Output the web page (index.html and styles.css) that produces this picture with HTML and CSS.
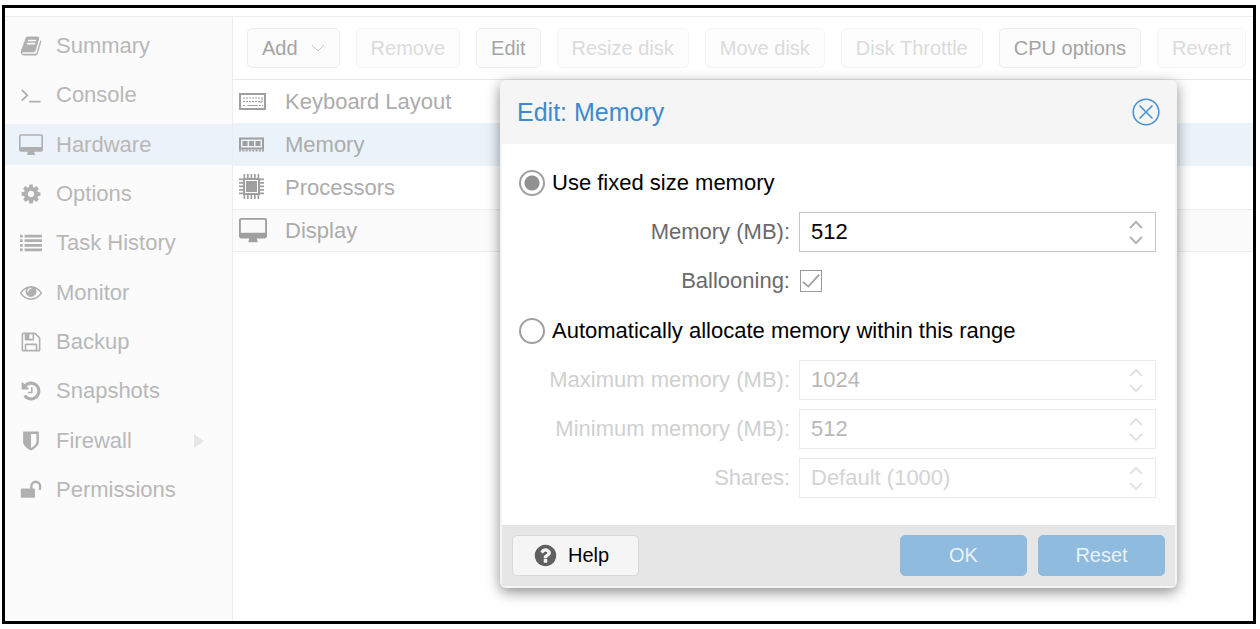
FILE: index.html
```html
<!DOCTYPE html>
<html lang="en">
<head>
<meta charset="utf-8">
<title>Edit: Memory</title>
<link rel="stylesheet" href="styles.css">
</head>
<body>
<div class="frame">
  <nav class="sidebar" aria-label="Virtual machine">
    <a class="nav-item" href="#summary"><svg class="nav-icon" viewBox="0 0 1792 1792"><path d="M1703 478q40 57 18 129l-275 906q-19 64-76.500 107.500t-122.500 43.500h-923q-77 0-148.500-53.500t-99.500-131.500q-24-67-2-127 0-4 3-27t4-37q1-8-3-21.500t-3-19.500q2-11 8-21t16.500-23.500 16.500-23.500q23-38 45-91.500t30-91.500q3-10 .5-30t-.5-28q3-11 17-28t17-23q21-36 42-92t25-90q1-9-2.500-32t.5-28q4-13 22-30.500t22-22.500q19-26 42.500-84.500t27.500-96.500q1-8-3-25.500t-2-26.500q2-8 9-18t18-23 17-21q8-12 16.500-30.500t15-35 16-36 19.500-32 26.500-23.500 36-11.500 47.500 5.500l-1 3q38-9 51-9h761q74 0 114 56t18 130l-274 906q-36 119-71.500 153.500t-128.500 34.500h-869q-27 0-38 15-11 16-1 43 24 70 144 70h923q29 0 56-15.500t35-41.500l300-987q7-22 5-57 38 15 59 43zm-1064 2q-4 13 2 22.500t20 9.500h608q13 0 25.500-9.500t16.500-22.500l21-64q4-13-2-22.500t-20-9.500h-608q-13 0-25.500 9.500t-16.500 22.500zm-83 256q-4 13 2 22.500t20 9.500h608q13 0 25.500-9.500t16.500-22.500l21-64q4-13-2-22.500t-20-9.500h-608q-13 0-25.500 9.500t-16.500 22.500z"/></svg>Summary</a>
    <a class="nav-item" href="#console"><svg class="nav-icon" viewBox="0 0 24 24"><path class="line" d="M2 6.500l6 5.800-6 5.800M10 19.200h12.500"/></svg>Console</a>
    <a class="nav-item nav-item-active" href="#hardware" aria-current="page"><svg class="nav-icon nav-icon-wide" viewBox="-64 -100 1920 1920"><path d="M1728 992v-832q0-13-9.500-22.500t-22.500-9.500h-1600q-13 0-22.500 9.500t-9.500 22.500v832q0 13 9.500 22.500t22.500 9.500h1600q13 0 22.500-9.500t9.500-22.500zm128-832v1088q0 66-47 113t-113 47h-544q0 37 16 77.500t32 71 16 43.500q0 26-19 45t-45 19h-512q-26 0-45-19t-19-45q0-14 16-44t32-70 16-78h-544q-66 0-113-47t-47-113v-1088q0-66 47-113t113-47h1600q66 0 113 47t47 113z"/></svg>Hardware</a>
    <a class="nav-item" href="#options"><svg class="nav-icon" viewBox="0 0 1792 1792"><path d="M1152 896q0-106-75-181t-181-75-181 75-75 181 75 181 181 75 181-75 75-181zm512-109v222q0 12-8 23t-20 13l-185 28q-19 54-39 91 35 50 107 138 10 12 10 25t-9 23q-27 37-99 108t-94 71q-12 0-26-9l-138-108q-44 23-91 38-16 136-29 186-7 28-36 28h-222q-14 0-24.500-8.500t-11.500-21.500l-28-184q-49-16-90-37l-141 107q-10 9-25 9-14 0-25-11-126-114-165-168-7-10-7-23 0-12 8-23 15-21 51-66.500t54-70.500q-27-50-41-99l-183-27q-13-2-21-12.500t-8-23.500v-222q0-12 8-23t19-13l186-28q14-46 39-92-40-57-107-138-10-12-10-24 0-10 9-23 26-36 98.500-107.500t94.500-71.500q13 0 26 10l138 107q44-23 91-38 16-136 29-186 7-28 36-28h222q14 0 24.500 8.500t11.500 21.500l28 184q49 16 90 37l142-107q9-9 24-9 13 0 25 10 129 119 165 170 7 8 7 22 0 12-8 23-15 21-51 66.500t-54 70.500q26 50 41 98l183 28q13 2 21 12.500t8 23.500z"/></svg>Options</a>
    <a class="nav-item" href="#history"><svg class="nav-icon" viewBox="0 0 24 24"><path d="M0 3h3v3H0zM0 8h3v3H0zM0 13h3v3H0zM0 18h3v3H0zM5 3h19v3H5zM5 8h19v3H5zM5 13h19v3H5zM5 18h19v3H5z"/></svg>Task History</a>
    <a class="nav-item" href="#monitor"><svg class="nav-icon" viewBox="0 64 1792 1792"><path d="M1664 960q-152-236-381-353 61 104 61 225 0 185-131.500 316.500t-316.500 131.500-316.500-131.500-131.500-316.500q0-121 61-225-229 117-381 353 133 205 333.500 326.500t434.500 121.500 434.500-121.500 333.500-326.500zm-720-384q0-20-14-34t-34-14q-125 0-214.500 89.500t-89.500 214.500q0 20 14 34t34 14 34-14 14-34q0-86 61-147t147-61q20 0 34-14t14-34zm848 384q0 34-20 69-140 230-376.500 368.500t-499.500 138.500-499.500-139-376.500-368q-20-35-20-69t20-69q140-229 376.500-368t499.500-139 499.500 139 376.500 368q20 35 20 69z"/></svg>Monitor</a>
    <a class="nav-item" href="#backup"><svg class="nav-icon" viewBox="0 0 1792 1792"><path d="M512 1536h768v-384h-768v384zm896 0h128v-896q0-14-10-38.500t-20-34.500l-281-281q-10-10-34-20t-39-10v416q0 40-28 68t-68 28h-576q-40 0-68-28t-28-68v-416h-128v1280h128v-416q0-40 28-68t68-28h832q40 0 68 28t28 68v416zm-384-928v-320q0-13-9.500-22.500t-22.500-9.500h-192q-13 0-22.500 9.500t-9.500 22.500v320q0 13 9.500 22.500t22.500 9.500h192q13 0 22.500-9.500t9.500-22.500zm640 32v928q0 40-28 68t-68 28h-1344q-40 0-68-28t-28-68v-1344q0-40 28-68t68-28h928q40 0 88 20t76 48l280 280q28 28 48 76t20 88z"/></svg>Backup</a>
    <a class="nav-item" href="#snapshots"><svg class="nav-icon" viewBox="0 0 1792 1792"><path d="M1664 896q0 156-61 298t-164 245-245 164-298 61q-172 0-327-72.500t-264-204.500q-7-10-6.500-22.500t8.500-20.500l137-138q10-9 25-9 16 2 23 12 73 95 179 147t225 52q104 0 198.500-40.500t163.500-109.500 109.500-163.500 40.500-198.500-40.500-198.500-109.500-163.500-163.500-109.500-198.500-40.500q-98 0-188 35.500t-160 101.500l137 138q31 30 14 69-17 40-59 40h-448q-26 0-45-19t-19-45v-448q0-42 40-59 39-17 69 14l130 129q107-101 244.500-156.500t284.500-55.500q156 0 298 61t245 164 164 245 61 298zm-640-288v448q0 14-9 23t-23 9h-320q-14 0-23-9t-9-23v-64q0-14 9-23t23-9h224v-352q0-14 9-23t23-9h64q14 0 23 9t9 23z"/></svg>Snapshots</a>
    <a class="nav-item" href="#firewall"><svg class="nav-icon" viewBox="0 0 1792 1792"><path d="M1344 960v-640h-448v1137q119-63 213-137 235-184 235-360zm192-768v768q0 86-33.500 170.500t-83 150-118 127.500-126.500 103-121 77.500-89.500 49.500-42.500 20q-12 6-26 6t-26-6q-16-7-42.500-20t-89.500-49.500-121-77.500-126.500-103-118-127.500-83-150-33.500-170.500v-768q0-26 19-45t45-19h1152q26 0 45 19t19 45z"/></svg>Firewall<svg class="nav-more" viewBox="0 0 10 14"><path d="M0 0l10 7-10 7z"/></svg></a>
    <a class="nav-item" href="#permissions"><svg class="nav-icon" viewBox="0 0 1792 1792"><path d="M1728 576v256q0 26-19 45t-45 19h-64q-26 0-45-19t-19-45v-256q0-106-75-181t-181-75-181 75-75 181v192h96q40 0 68 28t28 68v576q0 40-28 68t-68 28h-960q-40 0-68-28t-28-68v-576q0-40 28-68t68-28h672v-192q0-185 131.500-316.500t316.500-131.500 316.500 131.500 131.500 316.500z"/></svg>Permissions</a>
  </nav>

  <main class="content">
    <div class="toolbar">
      <button class="tool" type="button">Add<svg class="tool-caret" viewBox="0 0 14 8"><path d="M1 1l6 6 6-6"/></svg></button>
      <button class="tool" type="button" disabled>Remove</button>
      <button class="tool" type="button">Edit</button>
      <button class="tool" type="button" disabled>Resize disk</button>
      <button class="tool" type="button" disabled>Move disk</button>
      <button class="tool" type="button" disabled>Disk Throttle</button>
      <button class="tool" type="button">CPU options</button>
      <button class="tool" type="button" disabled>Revert</button>
    </div>
    <table class="hardware">
      <tr>
        <td class="hw-icon"><svg viewBox="0 0 28 28"><path class="stroke" d="M1 6h25v15H1z"/><path class="stroke thin" d="M4 10h17M4 13.500h17M4 17.500h3M20 17.500h4" stroke-dasharray="2 1"/><path class="stroke thin" d="M8.500 17.500h10M23 9v5h-3"/></svg></td>
        <td>Keyboard Layout</td>
      </tr>
      <tr class="selected">
        <td class="hw-icon"><svg viewBox="0 0 28 28"><path class="stroke" d="M1 7.500h23v10H1z"/><path d="M3.500 10h5v5h-5zM10 10h5v5h-5zM16.500 10h5v5h-5z"/><path class="stroke" d="M0 19.500h25" stroke-dasharray="2 1.300"/></svg></td>
        <td>Memory</td>
      </tr>
      <tr>
        <td class="hw-icon"><svg viewBox="0 0 28 28"><path class="stroke" d="M5 5h15v15H5z"/><path d="M7 7h11v11H7z"/><path class="stroke pins" d="M4.500 2h16.500M4.500 23h16.500M2 4.500v16.500M23 4.500v16.500" stroke-dasharray="1.700 1.800"/></svg></td>
        <td>Processors</td>
      </tr>
      <tr class="shaded">
        <td class="hw-icon"><svg viewBox="-64 -64 1920 1920"><path d="M1728 992v-832q0-13-9.500-22.500t-22.500-9.500h-1600q-13 0-22.500 9.500t-9.500 22.500v832q0 13 9.500 22.500t22.500 9.500h1600q13 0 22.500-9.500t9.500-22.500zm128-832v1088q0 66-47 113t-113 47h-544q0 37 16 77.500t32 71 16 43.500q0 26-19 45t-45 19h-512q-26 0-45-19t-19-45q0-14 16-44t32-70 16-78h-544q-66 0-113-47t-47-113v-1088q0-66 47-113t113-47h1600q66 0 113 47t47 113z"/></svg></td>
        <td>Display</td>
      </tr>
    </table>
  </main>

  <form class="dialog" role="dialog" aria-labelledby="dialog-title">
    <header class="dialog-head">
      <h1 class="dialog-title" id="dialog-title">Edit: Memory</h1>
      <button class="close" type="button" aria-label="Close"><svg viewBox="0 0 28 28"><circle cx="14" cy="14" r="12.800"/><path d="M7.500 7.500l13 13M20.500 7.500l-13 13"/></svg></button>
    </header>
    <div class="dialog-body">
      <div class="group">
        <div class="choice">
          <input class="radio" type="radio" name="mode" id="fixed" checked>
          <label for="fixed">Use fixed size memory</label>
        </div>
        <div class="row">
          <label for="memory">Memory (MB):</label>
          <div class="field">
            <input type="text" id="memory" value="512">
            <div class="spin">
              <button type="button" aria-label="Increase memory"><svg viewBox="0 0 16 10"><path d="M2 8l6-6 6 6"/></svg></button>
              <button type="button" aria-label="Decrease memory"><svg viewBox="0 0 16 10"><path d="M2 2l6 6 6-6"/></svg></button>
            </div>
          </div>
        </div>
        <div class="row">
          <label for="ballooning">Ballooning:</label>
          <span class="check">
            <input type="checkbox" id="ballooning" checked>
            <svg viewBox="0 0 24 24"><path d="M3 13l6 5L21 5"/></svg>
          </span>
        </div>
      </div>
      <div class="group">
        <div class="choice">
          <input class="radio" type="radio" name="mode" id="auto">
          <label for="auto">Automatically allocate memory within this range</label>
        </div>
        <div class="row row-off">
          <label for="maximum">Maximum memory (MB):</label>
          <div class="field">
            <input type="text" id="maximum" value="1024" disabled>
            <div class="spin">
              <button type="button" aria-label="Increase maximum" disabled><svg viewBox="0 0 16 10"><path d="M2 8l6-6 6 6"/></svg></button>
              <button type="button" aria-label="Decrease maximum" disabled><svg viewBox="0 0 16 10"><path d="M2 2l6 6 6-6"/></svg></button>
            </div>
          </div>
        </div>
        <div class="row row-off">
          <label for="minimum">Minimum memory (MB):</label>
          <div class="field">
            <input type="text" id="minimum" value="512" disabled>
            <div class="spin">
              <button type="button" aria-label="Increase minimum" disabled><svg viewBox="0 0 16 10"><path d="M2 8l6-6 6 6"/></svg></button>
              <button type="button" aria-label="Decrease minimum" disabled><svg viewBox="0 0 16 10"><path d="M2 2l6 6 6-6"/></svg></button>
            </div>
          </div>
        </div>
        <div class="row row-off">
          <label for="shares">Shares:</label>
          <div class="field">
            <input type="text" id="shares" placeholder="Default (1000)" disabled>
            <div class="spin">
              <button type="button" aria-label="Increase shares" disabled><svg viewBox="0 0 16 10"><path d="M2 8l6-6 6 6"/></svg></button>
              <button type="button" aria-label="Decrease shares" disabled><svg viewBox="0 0 16 10"><path d="M2 2l6 6 6-6"/></svg></button>
            </div>
          </div>
        </div>
      </div>
    </div>
    <footer class="dialog-foot">
      <button class="action help" type="button"><svg class="help-icon" viewBox="0 0 1792 1792"><path d="M1024 1376v-192q0-14-9-23t-23-9h-192q-14 0-23 9t-9 23v192q0 14 9 23t23 9h192q14 0 23-9t9-23zm256-672q0-88-55.500-163t-138.500-116-170-41q-243 0-371 213-15 24 8 42l132 100q7 6 19 6 16 0 25-12 53-68 86-92 34-24 86-24 48 0 85.500 26t37.500 59q0 38-20 61t-68 45q-63 28-115.500 86.500t-52.500 125.500v36q0 14 9 23t23 9h192q14 0 23-9t9-23q0-19 21.500-49.500t54.500-49.500q32-18 49-28.500t46-35 44.500-48 28-60.500 12.500-81zm384 192q0 209-103 385.500t-279.500 279.500-385.500 103-385.500-103-279.500-279.500-103-385.500 103-385.500 279.500-279.500 385.500-103 385.500 103 279.500 279.500 103 385.500z"/></svg>Help</button>
      <button class="action primary" type="submit" disabled>OK</button>
      <button class="action primary" type="reset" disabled>Reset</button>
    </footer>
  </form>
</div>
</body>
</html>
```

FILE: styles.css
```css
* {
  box-sizing: border-box;
}

body {
  margin: 0;
  padding: 5px 4px 5px 2px;
  min-height: 100vh;
  display: flex;
  background: #fff;
  font-family: "Liberation Sans", Arial, sans-serif;
  font-size: 22px;
}

button,
input {
  font: inherit;
  margin: 0;
}

svg {
  display: block;
  fill: currentColor;
}

/* Window frame */
.frame {
  position: relative;
  flex: 1;
  min-width: 0;
  display: flex;
  padding-top: 8px;
  border: 3px solid #000;
  overflow: hidden;
}

/* Navigation */
.sidebar {
  flex: none;
  width: 228px;
  display: flex;
  flex-direction: column;
  padding-top: 8px;
  border-top: 1px solid #ededed;
  border-right: 1px solid #ededed;
  background: #fbfbfb;
}

.nav-item {
  display: flex;
  align-items: center;
  height: 41px;
  margin-bottom: 8px;
  padding: 0 28px 0 14px;
  gap: 13px;
  color: #b8b8b8;
  text-decoration: none;
}

.nav-item:nth-child(3n + 2) {
  margin-bottom: 9px;
}

.nav-item-active {
  background: #ebf2f9;
}

.nav-icon {
  flex: none;
  width: 24px;
  height: 24px;
  padding: 1px;
  color: #b0b0b0;
}

.nav-icon-wide {
  padding: 0;
}

.nav-icon .line {
  fill: none;
  stroke: currentColor;
  stroke-width: 2;
}

.nav-more {
  width: 10px;
  height: 14px;
  margin-left: auto;
  color: #e6e6e6;
}

/* Toolbar */
.content {
  flex: 1;
  min-width: 0;
  border-top: 1px solid #ededed;
}

.toolbar {
  display: flex;
  gap: 16px;
  padding: 11px 14px;
  border-bottom: 1px solid #e8e8e8;
  overflow: hidden;
}

.tool {
  flex: none;
  display: flex;
  align-items: center;
  gap: 13px;
  height: 40px;
  padding: 0 14px;
  border: 1px solid #ececec;
  border-radius: 5px;
  background: #fcfcfc;
  color: #a4a4a4;
  font-size: 20px;
}

.tool:disabled {
  border-color: #f5f5f5;
  background: #fdfdfd;
  color: #dbdbdb;
}

.tool-caret {
  width: 14px;
  height: 8px;
  fill: none;
  stroke: #c8c8c8;
  stroke-width: 1;
}

/* Hardware list */
.hardware {
  width: 100%;
  border-collapse: collapse;
  color: #acacac;
}

.hardware tr {
  height: 43px;
}

.hardware .shaded {
  height: 42px;
}

.hardware td {
  padding: 1px 0 0;
}

.hardware .hw-icon {
  width: 52px;
  padding-left: 6px;
  color: #9f9f9f;
}

.hw-icon svg {
  width: 28px;
  height: 28px;
}

.hw-icon .stroke {
  fill: none;
  stroke: currentColor;
  stroke-width: 2;
}

.hw-icon .thin {
  stroke-width: 1;
}

.hw-icon .pins {
  stroke-width: 4;
}

.selected {
  background: #ebf3fa;
}

.shaded {
  border-top: 1px solid #ececec;
  border-bottom: 1px solid #ececec;
  background: #fbfbfb;
}

/* Dialog */
.dialog {
  position: absolute;
  top: 72px;
  left: 495px;
  width: 677px;
  border: 2px solid #f5f5f5;
  border-radius: 6px;
  background: #fff;
  box-shadow: 0 4px 14px rgba(0, 0, 0, 0.45);
}

.dialog-head {
  display: flex;
  align-items: center;
  justify-content: space-between;
  height: 62px;
  padding: 0 15px 2px;
  background: #f5f5f5;
}

.dialog-title {
  margin: 0;
  color: #3e8acc;
  font-size: 25px;
  font-weight: 400;
}

.close {
  padding: 0;
  border: 0;
  background: none;
  color: #4a93d0;
}

.close svg {
  width: 28px;
  height: 28px;
  fill: none;
  stroke: currentColor;
  stroke-width: 1.6;
}

.dialog-body {
  display: grid;
  gap: 10px;
  padding: 19px 19px 27px 17px;
}

.group {
  display: grid;
  gap: 9px;
}

.choice {
  display: flex;
  align-items: center;
  gap: 7px;
  height: 40px;
  color: #000;
}

.radio {
  appearance: none;
  width: 26px;
  height: 26px;
  border: 2px solid #a0a0a0;
  border-radius: 50%;
  background: #fff;
}

.radio:checked {
  background: radial-gradient(circle, #919191 7px, #fff 8px);
}

.row {
  display: grid;
  grid-template-columns: 271px 1fr;
  align-items: center;
  gap: 9px;
  height: 40px;
  color: #6a6a6a;
}

.row label {
  text-align: right;
}

.row-off {
  color: #d0d0d0;
}

.field {
  display: flex;
  height: 40px;
  border: 1px solid #c4c4c4;
}

.field input {
  flex: 1;
  min-width: 0;
  padding: 0 11px;
  border: 0;
  outline: 0;
  background: none;
  color: #000;
}

.row-off .field {
  border-color: #ebebeb;
}

.row-off .field input {
  color: #b8b8b8;
}

.row-off .field input::placeholder {
  color: #d4d4d4;
}

.spin {
  display: flex;
  flex-direction: column;
  justify-content: center;
  gap: 5px;
  padding: 0 11px;
  color: #b4b4b4;
}

.spin button {
  padding: 0;
  border: 0;
  background: none;
  color: inherit;
}

.spin svg {
  width: 16px;
  height: 10px;
  fill: none;
  stroke: currentColor;
  stroke-width: 2;
}

.row-off .spin {
  color: #e2e2e2;
}

.check {
  display: grid;
  width: 24px;
  height: 24px;
  padding: 1px;
}

.check input,
.check svg {
  grid-area: 1 / 1;
  width: 22px;
  height: 22px;
}

.check input {
  appearance: none;
  border: 1px solid #999;
}

.check svg {
  fill: none;
  stroke: #a0a0a0;
  stroke-width: 2;
  pointer-events: none;
}

.dialog-foot {
  display: flex;
  gap: 11px;
  padding: 10px;
  background: #e6e6e6;
}

.action {
  display: flex;
  align-items: center;
  justify-content: center;
  gap: 10px;
  width: 127px;
  height: 41px;
  padding: 0;
  border: 1px solid #d8d8d8;
  border-radius: 5px;
  font-size: 20px;
}

.help {
  justify-content: flex-start;
  margin-right: auto;
  padding-left: 20px;
  background: #f5f5f5;
  color: #000;
}

.help-icon {
  width: 25px;
  height: 25px;
  color: #606060;
}

.primary {
  border-color: #8fbbde;
  background: #8fbbde;
  color: #eaf2f9;
}
```
